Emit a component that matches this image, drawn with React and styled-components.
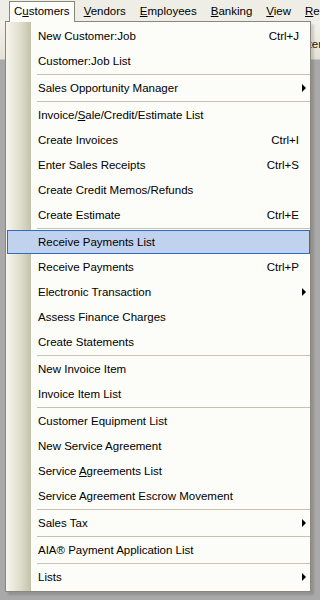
import React from "react";
import styled, { createGlobalStyle, css } from "styled-components";

const GlobalStyle = createGlobalStyle`
  html, body { margin: 0; padding: 0; }
  body {
    width: 320px;
    height: 600px;
    overflow: hidden;
    background: #a9a9a9;
    font-family: "Liberation Sans", Arial, sans-serif;
    font-size: 11.5px;
    color: #000;
  }
`;

const Screen = styled.div`
  position: relative;
  width: 320px;
  height: 600px;
  overflow: hidden;
  display: flex;
  flex-direction: column;
`;

const MenuBar = styled.div`
  display: flex;
  height: 21px;
  box-sizing: border-box;
  padding: 1px 0 0 7px;
  background: #efeee6;
  white-space: nowrap;
`;

const BarItem = styled.div`
  margin: 0 2px;
  padding: 0 4px;
  border: 1px solid transparent;
  border-bottom: 0;
  line-height: 19px;
  ${(p) =>
    p.$open &&
    css`
      border-color: #8a867a;
      background: #fcfcf9;
    `}
`;

const IconBar = styled.div`
  height: 38px;
  display: flex;
  justify-content: flex-end;
  align-items: center;
  background: linear-gradient(#f3f2ea, #e4e2d6);
  border-bottom: 1px solid #c9c6b6;
  white-space: nowrap;
`;

const IconLabel = styled.span`
  margin-right: -2px;
  padding-top: 8px;
  color: #1a1a1a;
`;

const Workspace = styled.div`
  flex: 1;
  background: #a9a9a9;
`;

const Dropdown = styled.div`
  position: absolute;
  top: 21px;
  left: 5px;
  width: 306px;
  box-sizing: border-box;
  border: 1px solid #8a867a;
  padding: 1px 0 2px;
  background-color: #fcfcf9;
  background-image: linear-gradient(to right, #f6f6ee, #dddccb 60%, #c3c2ab);
  background-size: 25px 100%;
  background-repeat: no-repeat;
  box-shadow: 3px 3px 2px rgba(0, 0, 0, 0.14);

  &::before {
    content: "";
    position: absolute;
    top: -1px;
    left: 4px;
    width: 64px;
    height: 1px;
    background: #fcfcf9;
  }
`;

const Row = styled.div`
  display: grid;
  grid-template-columns: 1fr auto 10px;
  align-items: center;
  box-sizing: border-box;
  height: 24px;
  margin: 1px 0 0 1px;
  padding-left: 30px;
  border: 1px solid transparent;
  line-height: 22px;
  white-space: nowrap;
  ${(p) =>
    p.$active &&
    css`
      background: #c1d2ee;
      border-color: #316ac5;
    `}
`;

const Shortcut = styled.span`
  text-align: right;
`;

const Arrow = styled.span`
  justify-self: start;
  margin-left: 3px;
  width: 0;
  height: 0;
  border-left: 4px solid #000;
  border-top: 4px solid transparent;
  border-bottom: 4px solid transparent;
  visibility: ${(p) => (p.$show ? "visible" : "hidden")};
`;

const Separator = styled.div`
  height: 1px;
  margin: 1px 0 0 31px;
  background: #c5c2b2;
`;

const items = [
  { label: "New Customer:Job", sc: "Ctrl+J" },
  { label: "Customer:Job List" },
  "sep",
  { label: "Sales Opportunity Manager", sub: true },
  "sep",
  { label: ["Invoice/", <u key="s">S</u>, "ale/Credit/Estimate List"] },
  { label: "Create Invoices", sc: "Ctrl+I" },
  { label: "Enter Sales Receipts", sc: "Ctrl+S" },
  { label: "Create Credit Memos/Refunds" },
  { label: "Create Estimate", sc: "Ctrl+E" },
  "sep",
  { label: "Receive Payments List", active: true },
  { label: "Receive Payments", sc: "Ctrl+P" },
  { label: "Electronic Transaction", sub: true },
  { label: "Assess Finance Charges" },
  { label: "Create Statements" },
  "sep",
  { label: "New Invoice Item" },
  { label: "Invoice Item List" },
  "sep",
  { label: "Customer Equipment List" },
  { label: "New Service Agreement" },
  { label: ["Service ", <u key="a">A</u>, "greements List"] },
  { label: "Service Agreement Escrow Movement" },
  "sep",
  { label: "Sales Tax", sub: true },
  "sep",
  { label: "AIA\u00AE Payment Application List" },
  "sep",
  { label: "Lists", sub: true },
];

export default function App() {
  return (
    <>
      <GlobalStyle />
      <Screen>
        <MenuBar>
          <BarItem $open>
            C<u>u</u>stomers
          </BarItem>
          <BarItem>
            <u>V</u>endors
          </BarItem>
          <BarItem>
            <u>E</u>mployees
          </BarItem>
          <BarItem>
            <u>B</u>anking
          </BarItem>
          <BarItem>
            <u>V</u>iew
          </BarItem>
          <BarItem>
            <u>R</u>eports
          </BarItem>
        </MenuBar>
        <IconBar>
          <IconLabel>Center</IconLabel>
        </IconBar>
        <Workspace />
        <Dropdown>
          {items.map((it, i) =>
            it === "sep" ? (
              <Separator key={i} />
            ) : (
              <Row key={i} $active={it.active}>
                <span>{it.label}</span>
                <Shortcut>{it.sc || ""}</Shortcut>
                <Arrow $show={it.sub} />
              </Row>
            )
          )}
        </Dropdown>
      </Screen>
    </>
  );
}
